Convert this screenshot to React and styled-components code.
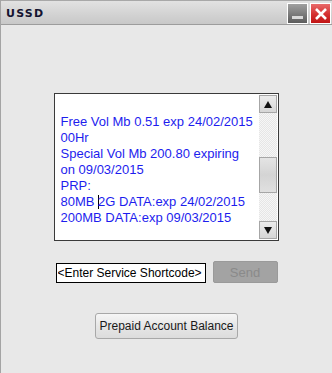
import React from 'react';
import styled, { createGlobalStyle } from 'styled-components';

const LINES = [
  'Free Vol Mb 0.51 exp 24/02/2015',
  '00Hr',
  'Special Vol Mb 200.80 expiring',
  'on 09/03/2015',
  'PRP:',
];

const GlobalStyle = createGlobalStyle`
  html, body {
    margin: 0;
    padding: 0;
    background: #e8e8e8;
  }
  body {
    font-family: "Liberation Sans", Arial, sans-serif;
  }
`;

export default function App() {
  return (
    <Window>
      <GlobalStyle />
      <TitleBar>
        <Title>USSD</Title>
        <TitleButtons>
          <WinButton kind="min">
            <MinBar />
          </WinButton>
          <WinButton kind="close">
            <svg width="14" height="12" viewBox="0 0 14 12">
              <path d="M2 1 L12 11 M12 1 L2 11" stroke="#fff" strokeWidth="2.6" />
            </svg>
          </WinButton>
        </TitleButtons>
      </TitleBar>
      <Content>
        <MessageBox>
          <MessageText>
            {LINES.map(line => (
              <Line key={line}>{line}</Line>
            ))}
            <Line>
              80MB <Caret />2G DATA:exp 24/02/2015
            </Line>
            <Line>200MB DATA:exp 09/03/2015</Line>
          </MessageText>
          <ScrollBar>
            <ArrowButton>
              <Arrow dir="up" />
            </ArrowButton>
            <Track>
              <Thumb />
            </Track>
            <ArrowButton>
              <Arrow dir="down" />
            </ArrowButton>
          </ScrollBar>
        </MessageBox>
        <InputRow>
          <CodeInput readOnly value="<Enter Service Shortcode>" />
          <SendButton disabled>Send</SendButton>
        </InputRow>
        <BalanceButton>Prepaid Account Balance</BalanceButton>
      </Content>
    </Window>
  );
}

const Window = styled.div`
  width: 332px;
  height: 373px;
  box-sizing: border-box;
  border-left: 1px solid #a4a4a4;
  background: #e8e8e8;
  display: flex;
  flex-direction: column;
`;

const TitleBar = styled.div`
  height: 25px;
  box-sizing: border-box;
  border-top: 1px solid #a8a8a8;
  border-bottom: 1px solid #9c9c9c;
  background: linear-gradient(#e2e2e2, #d2d2d2 60%, #c8c8c8);
  display: flex;
  align-items: center;
  justify-content: space-between;
  padding: 0 1px 0 5px;
`;

const Title = styled.span`
  font-family: "DejaVu Sans", Verdana, sans-serif;
  font-weight: 700;
  font-size: 11px;
  letter-spacing: 1.2px;
  color: #141430;
  margin-top: 1px;
`;

const TitleButtons = styled.div`
  display: flex;
  gap: 2px;
  margin-top: 2px;
`;

const WinButton = styled.div`
  width: 21px;
  height: 21px;
  box-sizing: border-box;
  border: 1px solid #fff;
  display: flex;
  align-items: center;
  justify-content: center;
  background: ${p =>
    p.kind === 'close'
      ? 'linear-gradient(#e86a6a, #d43030 55%, #c01414)'
      : 'linear-gradient(#a0a0a0, #7a7a7a 55%, #5c5c5c)'};
`;

const MinBar = styled.div`
  width: 11px;
  height: 3px;
  background: #d8d8d8;
  margin-top: 8px;
`;

const Content = styled.div`
  display: flex;
  flex-direction: column;
  align-items: center;
  padding-top: 68px;
`;

const MessageBox = styled.div`
  width: 225px;
  height: 148px;
  box-sizing: border-box;
  border: 1px solid #3a3a3a;
  background: #fff;
  display: flex;
  margin-left: -1px;
`;

const MessageText = styled.div`
  flex: 1;
  padding: 20px 0 0 6px;
  overflow: hidden;
  font-family: "Liberation Sans", Arial, sans-serif;
  font-size: 13px;
  line-height: 16px;
  color: #1d1dee;
`;

const Line = styled.div`
  white-space: nowrap;
`;

const Caret = styled.span`
  display: inline-block;
  width: 1px;
  height: 14px;
  background: #000;
  vertical-align: -3px;
  margin-right: -1px;
`;

const ScrollBar = styled.div`
  width: 18px;
  padding: 1px 1px 1px 0;
  display: flex;
  flex-direction: column;
`;

const ArrowButton = styled.div`
  height: 18px;
  box-sizing: border-box;
  border: 1px solid #a6a6a6;
  background: linear-gradient(#ececec, #d6d6d6);
  display: flex;
  align-items: center;
  justify-content: center;
`;

const Arrow = styled.div`
  width: 0;
  height: 0;
  border-left: 4px solid transparent;
  border-right: 4px solid transparent;
  ${p =>
    p.dir === 'up'
      ? 'border-bottom: 7px solid #111;'
      : 'border-top: 7px solid #111;'}
`;

const Track = styled.div`
  flex: 1;
  background-color: #f4f4f4;
  background-image: repeating-conic-gradient(#e6e6e6 0 25%, #f6f6f6 0 50%);
  background-size: 2px 2px;
  position: relative;
`;

const Thumb = styled.div`
  position: absolute;
  left: 0;
  right: 0;
  top: 44px;
  height: 36px;
  box-sizing: border-box;
  border: 1px solid #a6a6a6;
  background: linear-gradient(#e4e4e4, #d4d4d4 50%, #e0e0e0);
`;

const InputRow = styled.div`
  display: flex;
  align-items: flex-start;
  gap: 7px;
  margin-top: 20px;
`;

const CodeInput = styled.input`
  width: 150px;
  height: 20px;
  box-sizing: border-box;
  margin: 2px 0 0;
  padding: 0 1px;
  border: 1px solid #000;
  outline: none;
  background: #fff;
  font-family: "Liberation Sans", Arial, sans-serif;
  font-size: 12px;
  color: #000;
`;

const SendButton = styled.button`
  width: 65px;
  height: 22px;
  box-sizing: border-box;
  border: 1px solid #9a9a9a;
  border-radius: 2px;
  background: #a3a3a3;
  font-family: "Liberation Sans", Arial, sans-serif;
  font-size: 13px;
  color: #8a8a8a;
  padding: 0;
`;

const BalanceButton = styled.button`
  margin-top: 30px;
  width: 143px;
  height: 26px;
  box-sizing: border-box;
  border: 1px solid #a8a8a8;
  border-radius: 3px;
  background: linear-gradient(#f6f6f6, #e6e6e6 50%, #dcdcdc);
  font-family: "Liberation Sans", Arial, sans-serif;
  font-size: 12px;
  color: #1a1a1a;
  padding: 0;
`;
